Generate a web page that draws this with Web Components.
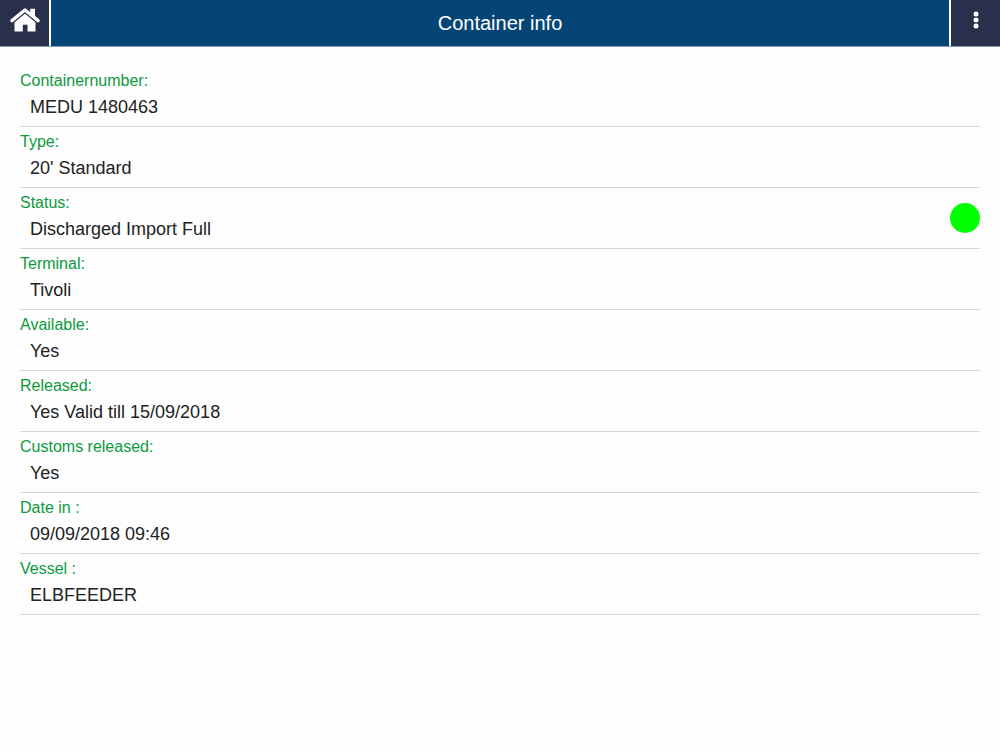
<!DOCTYPE html>
<html lang="en">
<head>
<meta charset="utf-8">
<meta name="viewport" content="width=device-width, initial-scale=1">
<title>Container info</title>
<style>
  html { background: #fefefe; }
  body { margin: 0; font-family: "Liberation Sans", Arial, sans-serif; color: #222; }
</style>
</head>
<body>
<container-page></container-page>
<script>
  const define = (name, markup) => {
    const template = document.createElement('template');
    template.innerHTML = markup;
    customElements.define(name, class extends HTMLElement {
      constructor() {
        super();
        this.attachShadow({ mode: 'open' }).append(template.content.cloneNode(true));
      }
    });
  };

  define('icon-button', `
    <style>
      :host { display: block; }
      button { display: flex; align-items: center; justify-content: center; width: 100%; height: 100%;
               margin: 0; padding: 0 0 6px; border: 0; background: #29304b; color: #fff; cursor: pointer; }
    </style>
    <button type="button"><slot></slot></button>`);

  define('app-bar', `
    <style>
      :host { display: grid; grid-template-columns: 49px 1fr 49px; column-gap: 2px; height: 46px;
              border-bottom: 1px solid #8398b4; background: #fff; }
      h1 { display: flex; align-items: center; justify-content: center; margin: 0;
           background: #044576; color: #fff; font-size: 20px; font-weight: 400; line-height: 24px; }
    </style>
    <slot name="start"></slot>
    <h1><slot></slot></h1>
    <slot name="end"></slot>`);

  define('info-row', `
    <style>
      :host { display: flex; align-items: center; justify-content: space-between;
              height: 60px; border-bottom: 1px solid #d9d9d9; }
      .label { padding-top: 2px; color: #0c9a3c; font-size: 16px; line-height: 24px; }
      .value { padding: 2px 0 6px 10px; font-size: 18px; line-height: 24px; }
    </style>
    <div>
      <div class="label"><slot name="label"></slot></div>
      <div class="value"><slot></slot></div>
    </div>
    <slot name="status"></slot>`);

  define('status-dot', `
    <style>
      :host { display: block; width: 30px; height: 30px; border-radius: 50%; background: #0f0; }
    </style>`);

  define('container-page', `
    <style>
      :host { display: block; }
      main { padding: 19px 20px; }
      svg { display: block; }
    </style>
    <app-bar>
      <icon-button slot="start">
        <svg width="30" height="24" viewBox="0 0 30 24" role="img" aria-label="Home">
          <path d="M4.500 14 15 5.500 25.500 14V23.500H17.500V16.800H12.800V23.500H4.500Z" fill="currentColor"/>
          <path d="M20.200 0.800H25V10L20.200 6Z" fill="currentColor"/>
          <path d="M2 12.600 15 2 28 12.600" fill="none" stroke="currentColor" stroke-width="3.400" stroke-linecap="round" stroke-linejoin="round"/>
          <path d="M3.400 14.600 15 5.100 26.600 14.600" fill="none" stroke="#29304b" stroke-width="0.900"/>
        </svg>
      </icon-button>
      Container info
      <icon-button slot="end">
        <svg width="6" height="18" viewBox="0 0 6 18" role="img" aria-label="Menu" fill="currentColor">
          <circle cx="3" cy="3" r="2.500"/><circle cx="3" cy="9" r="2.500"/><circle cx="3" cy="15" r="2.500"/>
        </svg>
      </icon-button>
    </app-bar>
    <main>
      <info-row><span slot="label">Containernumber:</span>MEDU 1480463</info-row>
      <info-row><span slot="label">Type:</span>20' Standard</info-row>
      <info-row><span slot="label">Status:</span>Discharged Import Full<status-dot slot="status" role="img" aria-label="Active"></status-dot></info-row>
      <info-row><span slot="label">Terminal:</span>Tivoli</info-row>
      <info-row><span slot="label">Available:</span>Yes</info-row>
      <info-row><span slot="label">Released:</span>Yes Valid till 15/09/2018</info-row>
      <info-row><span slot="label">Customs released:</span>Yes</info-row>
      <info-row><span slot="label">Date in :</span>09/09/2018 09:46</info-row>
      <info-row><span slot="label">Vessel :</span>ELBFEEDER</info-row>
    </main>`);
</script>
</body>
</html>
